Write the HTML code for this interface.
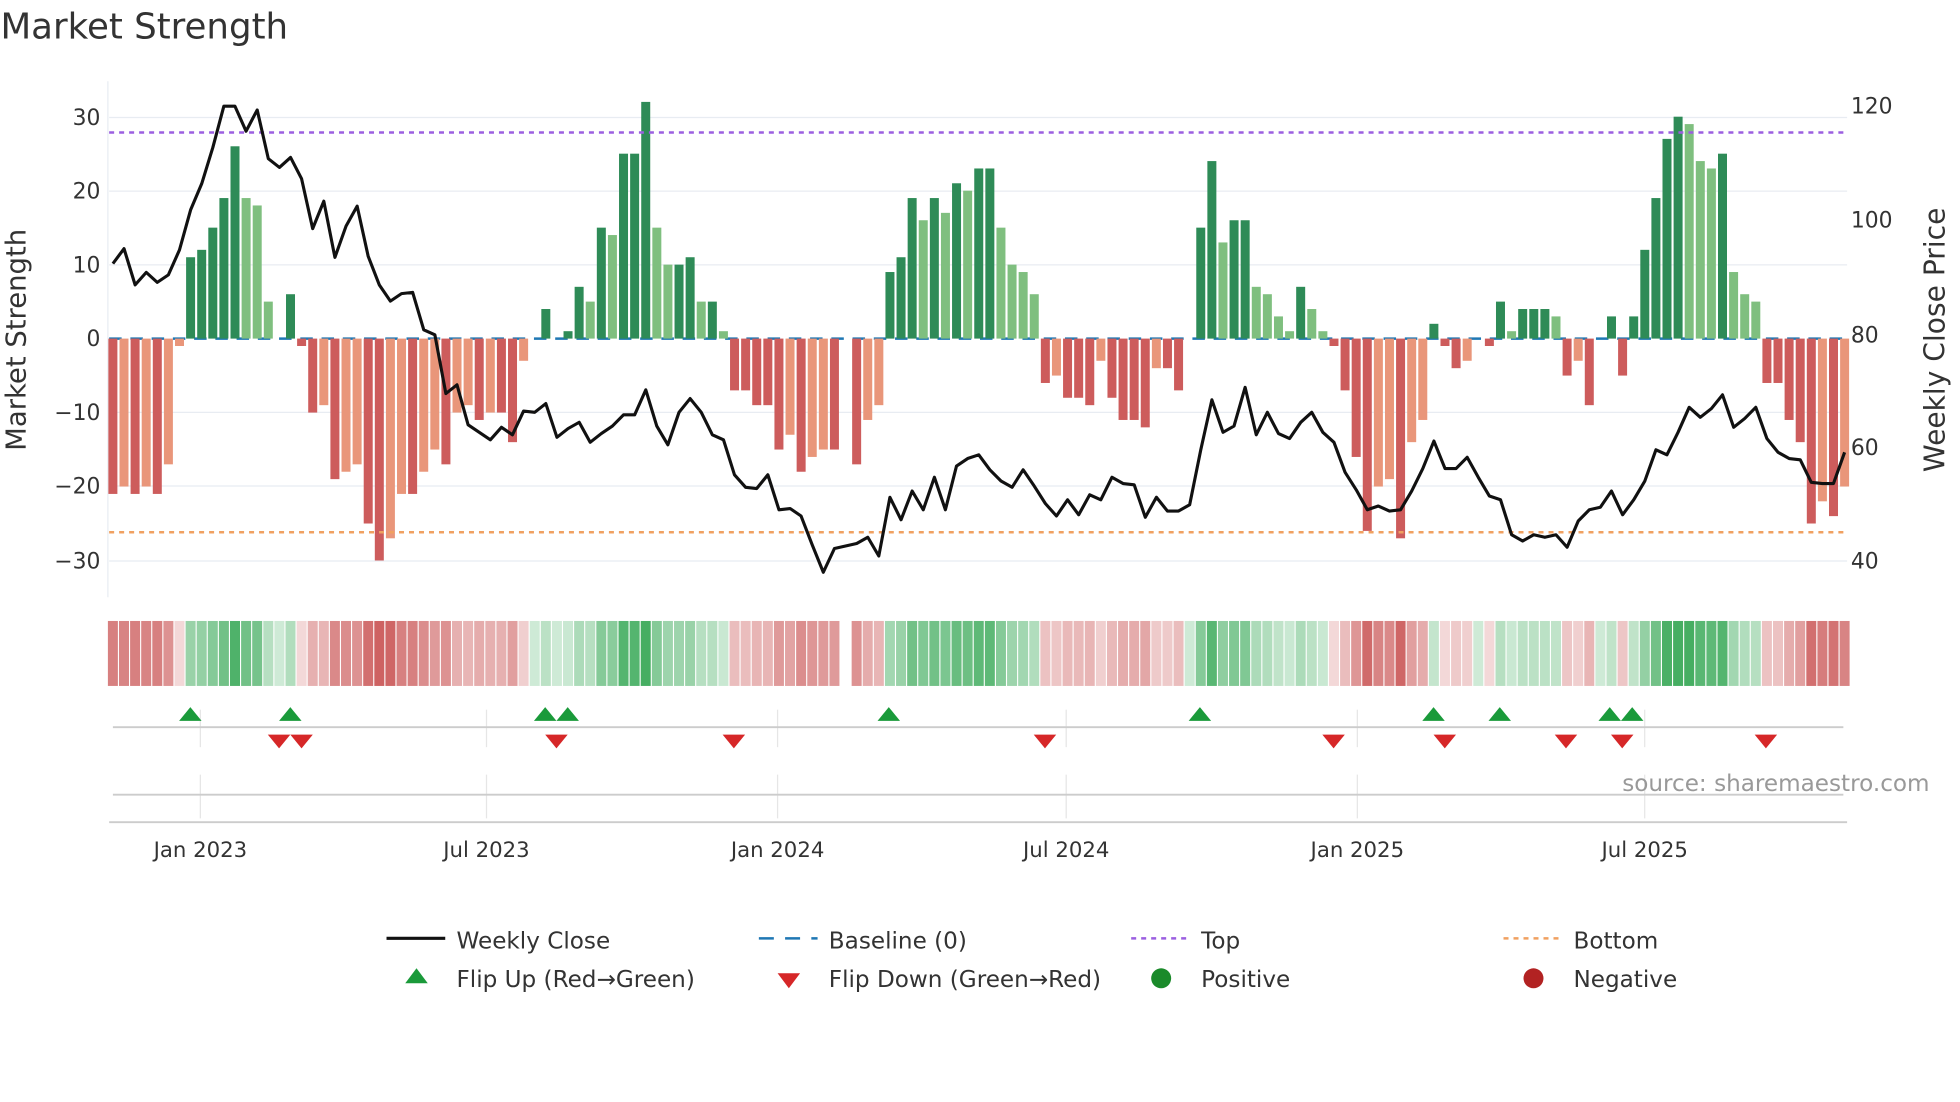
<!DOCTYPE html>
<html><head><meta charset="utf-8"><style>
html,body{margin:0;padding:0;background:#fff;}
svg{display:block;font-family:"DejaVu Sans","Liberation Sans",sans-serif;}
</style></head><body>
<svg id="s" width="1960" height="1102" viewBox="0 0 1568 882" xmlns="http://www.w3.org/2000/svg">
<rect width="1568" height="882" fill="#fff"/>
<text x="0" y="31" font-size="28.5" fill="#333">Market Strength</text>
<g stroke="#e8ecf2" stroke-width="1">
<line x1="87" y1="94" x2="1478" y2="94"/><line x1="87" y1="153" x2="1478" y2="153"/><line x1="87" y1="212" x2="1478" y2="212"/>
<line x1="87" y1="330" x2="1478" y2="330"/><line x1="87" y1="389" x2="1478" y2="389"/><line x1="87" y1="449" x2="1478" y2="449"/>
<line x1="86" y1="65" x2="86" y2="478"/>
</g>
<g font-size="17.5" fill="#333" text-anchor="end">
<text x="80" y="100">30</text><text x="80" y="159">20</text><text x="80" y="218">10</text><text x="80" y="277">0</text>
<text x="80" y="336">−10</text><text x="80" y="395">−20</text><text x="80" y="455">−30</text>
</g>
<g font-size="17.5" fill="#333">
<text x="1481" y="91">120</text><text x="1481" y="182">100</text><text x="1481" y="274">80</text><text x="1481" y="364">60</text><text x="1481" y="455">40</text>
</g>
<text transform="translate(20,272) rotate(-90)" font-size="22" fill="#333" text-anchor="middle">Market Strength</text>
<text transform="translate(1556,272) rotate(-90)" font-size="22.5" fill="#333" text-anchor="middle">Weekly Close Price</text>
<line x1="87" y1="271" x2="1478" y2="271" stroke="#1f77b4" stroke-width="2" stroke-dasharray="10,7"/>
<g id="bars"></g>
<line x1="87" y1="106" x2="1478" y2="106" stroke="#9b5fe0" stroke-width="2" stroke-dasharray="4,4"/>
<line x1="87" y1="426" x2="1478" y2="426" stroke="#f0a060" stroke-width="2" stroke-dasharray="4,4"/>
<polyline id="price" fill="none" stroke="#111" stroke-width="2.5" stroke-linejoin="round"/>
<g id="heat"></g>
<g stroke="#e6e6e6"><line x1="160" y1="568" x2="160" y2="598"/><line x1="389" y1="568" x2="389" y2="598"/><line x1="622" y1="568" x2="622" y2="598"/><line x1="853" y1="568" x2="853" y2="598"/><line x1="1086" y1="568" x2="1086" y2="598"/><line x1="1316" y1="568" x2="1316" y2="598"/>
<line x1="160" y1="620" x2="160" y2="655"/><line x1="389" y1="620" x2="389" y2="655"/><line x1="622" y1="620" x2="622" y2="655"/><line x1="853" y1="620" x2="853" y2="655"/><line x1="1086" y1="620" x2="1086" y2="655"/><line x1="1316" y1="620" x2="1316" y2="655"/></g>
<line x1="90" y1="582" x2="1475" y2="582" stroke="#ccc" stroke-width="1.5"/>
<line x1="90" y1="636" x2="1475" y2="636" stroke="#ccc" stroke-width="1.5"/>
<line x1="87" y1="658" x2="1478" y2="658" stroke="#ccc" stroke-width="1.5"/>
<g id="marks"></g>
<text x="1544" y="633" font-size="18.5" fill="#999" text-anchor="end">source: sharemaestro.com</text>
<g font-size="17" fill="#333" text-anchor="middle">
<text x="160" y="686">Jan 2023</text><text x="389" y="686">Jul 2023</text><text x="622" y="686">Jan 2024</text><text x="853" y="686">Jul 2024</text><text x="1086" y="686">Jan 2025</text><text x="1316" y="686">Jul 2025</text>
</g>
<g font-size="18.5" fill="#333">
<line x1="309" y1="751" x2="356" y2="751" stroke="#111" stroke-width="2.5"/><text x="365" y="759">Weekly Close</text>
<line x1="607" y1="751" x2="654" y2="751" stroke="#1f77b4" stroke-width="2" stroke-dasharray="12,9"/><text x="663" y="759">Baseline (0)</text>
<line x1="905" y1="751" x2="952" y2="751" stroke="#9b5fe0" stroke-width="2" stroke-dasharray="4,4"/><text x="961" y="759">Top</text>
<line x1="1203" y1="751" x2="1250" y2="751" stroke="#f0a060" stroke-width="2" stroke-dasharray="4,4"/><text x="1259" y="759">Bottom</text>
<polygon points="333,775 324,787 342,787" fill="#1a9a3a"/><text x="365" y="790">Flip Up (Red→Green)</text>
<polygon points="622,779 640,779 631,791" fill="#d62728"/><text x="663" y="790">Flip Down (Green→Red)</text>
<circle cx="929" cy="783" r="8" fill="#1a8a2a"/><text x="961" y="790">Positive</text>
<circle cx="1227" cy="783" r="8" fill="#b22222"/><text x="1259" y="790">Negative</text>
</g>
</svg>
<script>
var v=[-21,-20,-21,-20,-21,-17,-1,11,12,15,19,26,19,18,5,0,6,-1,-10,-9,-19,-18,-17,-25,-30,-27,-21,-21,-18,-15,-17,-10,-9,-11,-10,-10,-14,-3,0,4,0,1,7,5,15,14,25,25,32,15,10,10,11,5,5,1,-7,-7,-9,-9,-15,-13,-18,-16,-15,-15,null,-17,-11,-9,9,11,19,16,19,17,21,20,23,23,15,10,9,6,-6,-5,-8,-8,-9,-3,-8,-11,-11,-12,-4,-4,-7,0,15,24,13,16,16,7,6,3,1,7,4,1,-1,-7,-16,-26,-20,-19,-27,-14,-11,2,-1,-4,-3,0,-1,5,1,4,4,4,3,-5,-3,-9,0,3,-5,3,12,19,27,30,29,24,23,25,9,6,5,-6,-6,-11,-14,-25,-22,-24,-20];
var p=[211,199,228,218,226,220,200,168,147,118,85,85,105,88,127,134,126,143,183,161,206,181,165,205,228,241,235,234,264,268,315,308,340,346,352,342,348,329,330,323,350,343,338,354,347,341,332,332,312,341,356,330,319,330,348,352,380,390,391,380,408,407,413,436,458,439,437,435,430,445,398,416,393,408,382,408,373,367,364,376,385,390,376,389,403,413,400,412,396,400,382,387,388,414,398,409,409,404,360,320,346,341,310,348,330,347,351,338,330,346,354,378,392,408,405,409,408,393,375,353,375,375,366,382,397,400,428,433,428,430,428,438,417,408,406,393,412,400,385,360,364,346,326,334,327,316,342,335,326,351,362,367,368,386,387,387,362];
var N=v.length,dx=(1476-90)/(N-1),ns="http://www.w3.org/2000/svg";
function el(t,a,g){var e=document.createElementNS(ns,t);for(var k in a)e.setAttribute(k,a[k]);document.getElementById(g).appendChild(e);}
for(var i=0;i<N;i++){var x=90+dx*i,a=v[i];if(a===null)continue;var pr=i>0&&v[i-1]!==null?v[i-1]:0;
 var c;if(a>=0)c=(a>=pr)?"#2e8b57":"#7fbf7f";else c=(a<=pr)?"#cd5c5c":"#e9967a";
 var h=Math.abs(a)*5.92;if(a!==0)el("rect",{x:x-3.6,y:a>0?271-h:271,width:7.2,height:h,fill:c},"bars");
 var t=Math.min(1,Math.abs(a)/28),hc;
 if(a>=0)hc="rgba(60,170,90,"+(0.25+0.7*t)+")";else hc="rgba(200,80,80,"+(0.2+0.7*t)+")";
 el("rect",{x:x-4,y:497,width:8,height:52,fill:hc},"heat");}
var pts=[];for(var i=0;i<p.length;i++)pts.push((90+dx*i).toFixed(1)+","+p[i]);
document.getElementById("price").setAttribute("points",pts.join(" "));
[152,232,436,454,711,960,1147,1200,1288,1306].forEach(function(x){el("polygon",{points:x+",566 "+(x-9)+",577 "+(x+9)+",577",fill:"#1a9a3a"},"marks");});
[223,241,445,587,836,1067,1156,1253,1298,1413].forEach(function(x){el("polygon",{points:(x-9)+",588 "+(x+9)+",588 "+x+",599",fill:"#d62728"},"marks");});
</script>
</body></html>
